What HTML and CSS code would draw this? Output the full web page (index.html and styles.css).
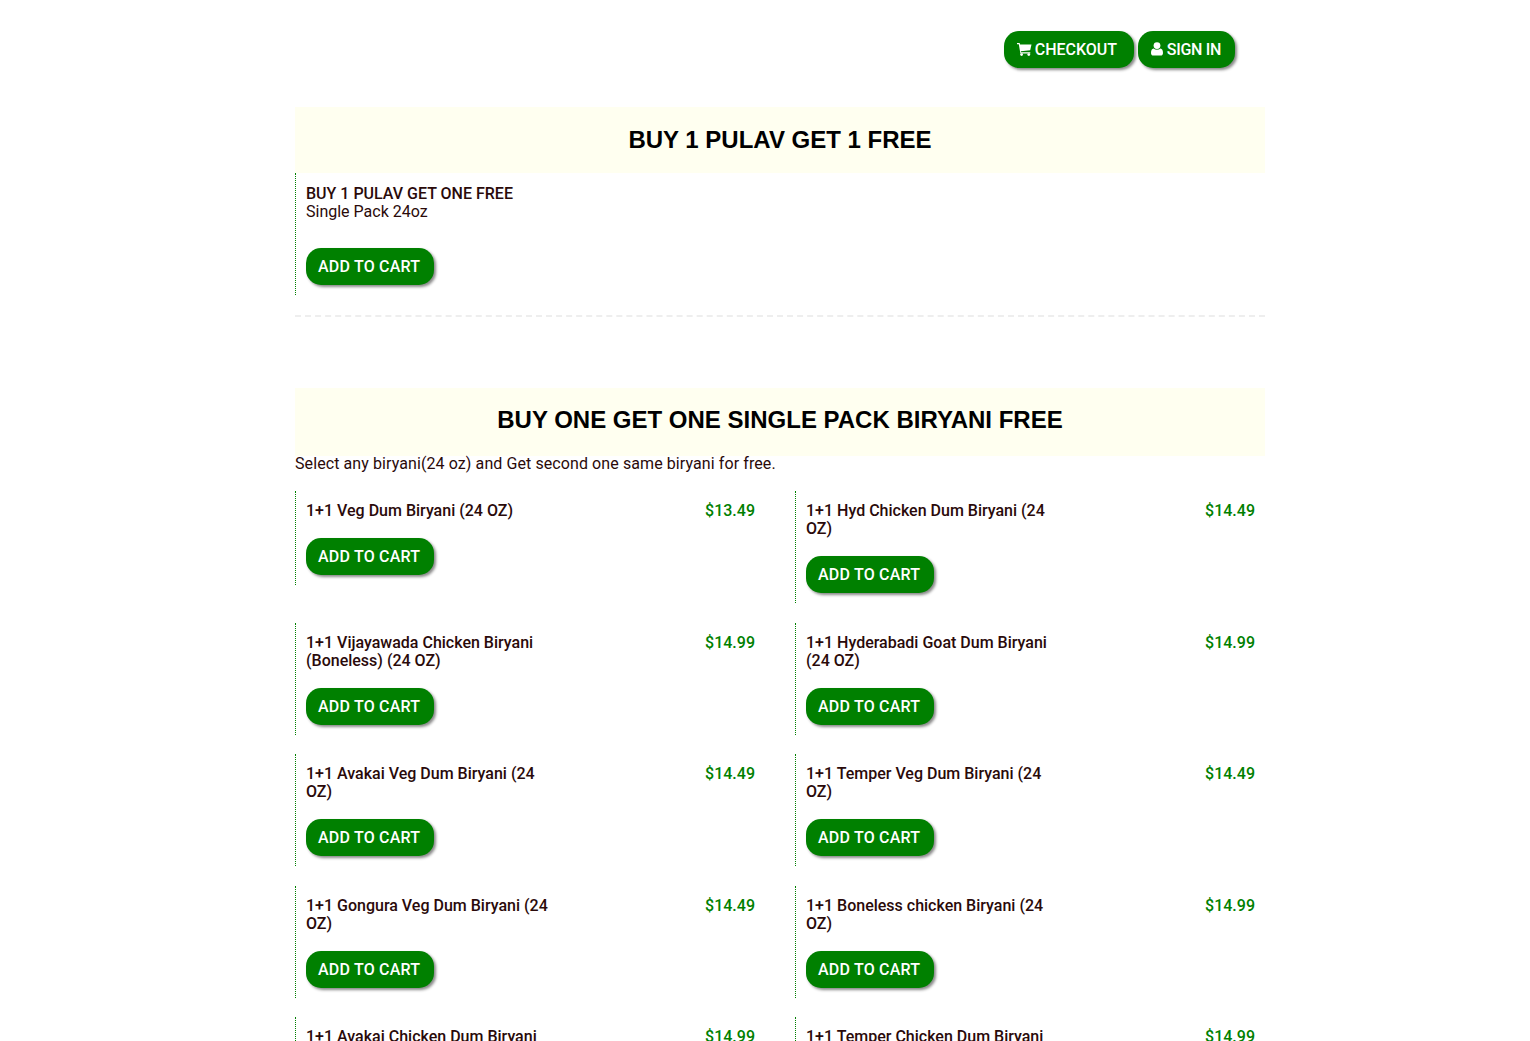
FILE: index.html
```html
<!DOCTYPE html>
<html lang="en">

    <head>
        <meta charset="UTF-8">
        <meta name="viewport" content="width=device-width, initial-scale=1.0">
        <link rel="stylesheet" href="styles.css">
        <title>Menu</title>
    </head>

    <body>
        <div class="container">
            <div class="top-buttons">
                <a class="btn checkout" href="#"><svg class="icon" width="15" height="14" viewBox="0 0 15 14"><path d="M0 1h2.600l.5 1.400h11.400l-1.300 5.800-9.400 1 .3 1.100h9.200v1.200H3.400L1.800 2.200H0z"/><circle cx="4.600" cy="12.600" r="1.400"/><circle cx="11.800" cy="12.600" r="1.400"/></svg> CHECKOUT</a>
                <a class="btn signin" href="#"><svg class="icon" width="12" height="14" viewBox="0 0 12 14"><circle cx="6" cy="3.600" r="3.400"/><path d="M2.600 6.600c1.800 1.600 5 1.600 6.800 0 1.700.3 2.600 1.900 2.600 4.300 0 1.700-1 2.600-2.400 2.600H2.400C1 13.500 0 12.600 0 10.900c0-2.400.9-4 2.600-4.300z"/></svg> SIGN IN</a>
            </div>

            <h2 class="section-title first">BUY 1 PULAV GET 1 FREE</h2>
            <div class="item single">
                <div class="item-name">BUY 1 PULAV GET ONE FREE</div>
                <div class="item-desc">Single Pack 24oz</div>
                <a class="btn add" href="#">ADD TO CART</a>
            </div>
            <div class="divider"></div>

            <h2 class="section-title">BUY ONE GET ONE SINGLE PACK BIRYANI FREE</h2>
            <p class="section-desc">Select any biryani(24 oz) and Get second one same biryani for free.</p>

            <div class="item-list">
                <div class="item">
                    <div class="item-top"><div class="item-name">1+1 Veg Dum Biryani (24 OZ)</div><div class="item-price">$13.49</div></div>
                    <a class="btn add" href="#">ADD TO CART</a>
                </div>
                <div class="item">
                    <div class="item-top"><div class="item-name">1+1 Hyd Chicken Dum Biryani (24 OZ)</div><div class="item-price">$14.49</div></div>
                    <a class="btn add" href="#">ADD TO CART</a>
                </div>
                <div class="item">
                    <div class="item-top"><div class="item-name">1+1 Vijayawada Chicken Biryani (Boneless) (24 OZ)</div><div class="item-price">$14.99</div></div>
                    <a class="btn add" href="#">ADD TO CART</a>
                </div>
                <div class="item">
                    <div class="item-top"><div class="item-name">1+1 Hyderabadi Goat Dum Biryani (24 OZ)</div><div class="item-price">$14.99</div></div>
                    <a class="btn add" href="#">ADD TO CART</a>
                </div>
                <div class="item">
                    <div class="item-top"><div class="item-name">1+1 Avakai Veg Dum Biryani (24 OZ)</div><div class="item-price">$14.49</div></div>
                    <a class="btn add" href="#">ADD TO CART</a>
                </div>
                <div class="item">
                    <div class="item-top"><div class="item-name">1+1 Temper Veg Dum Biryani (24 OZ)</div><div class="item-price">$14.49</div></div>
                    <a class="btn add" href="#">ADD TO CART</a>
                </div>
                <div class="item">
                    <div class="item-top"><div class="item-name">1+1 Gongura Veg Dum Biryani (24 OZ)</div><div class="item-price">$14.49</div></div>
                    <a class="btn add" href="#">ADD TO CART</a>
                </div>
                <div class="item">
                    <div class="item-top"><div class="item-name">1+1 Boneless chicken Biryani (24 OZ)</div><div class="item-price">$14.99</div></div>
                    <a class="btn add" href="#">ADD TO CART</a>
                </div>
                <div class="item">
                    <div class="item-top"><div class="item-name">1+1 Avakai Chicken Dum Biryani (24 OZ)</div><div class="item-price">$14.99</div></div>
                    <a class="btn add" href="#">ADD TO CART</a>
                </div>
                <div class="item">
                    <div class="item-top"><div class="item-name">1+1 Temper Chicken Dum Biryani (24 OZ)</div><div class="item-price">$14.99</div></div>
                    <a class="btn add" href="#">ADD TO CART</a>
                </div>
            </div>
        </div>
    </body>
</html>
```

FILE: styles.css
```css
body {
    margin: 0;
    background-color: #fff;
    color: #2a0a0a;
    font-family: Roboto, "Noto Sans", sans-serif;
    font-size: 16px;
    line-height: 18px;
}

.container {
    width: 970px;
    margin-left: 295px;
}

.top-buttons {
    display: flex;
    justify-content: flex-end;
    gap: 4px;
    padding: 31px 30px 39px 0;
}

.btn {
    display: inline-block;
    padding: 10px 14px 10px 13px;
    background-color: #008000;
    border-radius: 15px;
    box-shadow: 2px 2px 3px #888;
    color: #fff;
    font-size: 16px;
    line-height: 17px;
    font-weight: 500;
    text-decoration: none;
    white-space: nowrap;
}

.checkout {
    padding-right: 17px;
    word-spacing: -1px;
}

.signin {
    letter-spacing: -0.3px;
}

.icon {
    fill: #fff;
    vertical-align: -1px;
}

.section-title {
    margin: 0;
    padding: 18px 0 22px;
    background-color: #fffff0;
    color: #000;
    font-family: "Liberation Sans", Arial, sans-serif;
    font-size: 24px;
    line-height: 28px;
    font-weight: bold;
    text-align: center;
}

.section-title.first {
    padding: 19px 0;
}

.section-desc {
    margin: 0 0 19px;
    line-height: 16px;
    letter-spacing: 0.09px;
}

.item {
    box-sizing: border-box;
    padding: 11px 10px 10px;
    border-left: 1px dotted #008000;
}

.item.single {
    padding-top: 11.5px;
}

.item-name {
    font-weight: 500;
}

.item-desc {
    margin-bottom: 27.5px;
}

.item-top {
    display: flex;
    justify-content: space-between;
    margin-bottom: 18px;
}

.item-top .item-name {
    width: 250px;
}

.item-price {
    color: #008000;
    font-weight: 500;
}

.add {
    display: block;
    width: 102px;
    padding-left: 12px;
    letter-spacing: 0.2px;
}

.divider {
    margin: 20px 0 71px;
    border-top: 2px dashed #eee;
}

.item-list {
    display: flex;
    flex-wrap: wrap;
    align-items: flex-start;
    margin-right: -30px;
}

.item-list .item {
    width: 470px;
    margin-right: 30px;
    margin-bottom: 19.5px;
}
```
